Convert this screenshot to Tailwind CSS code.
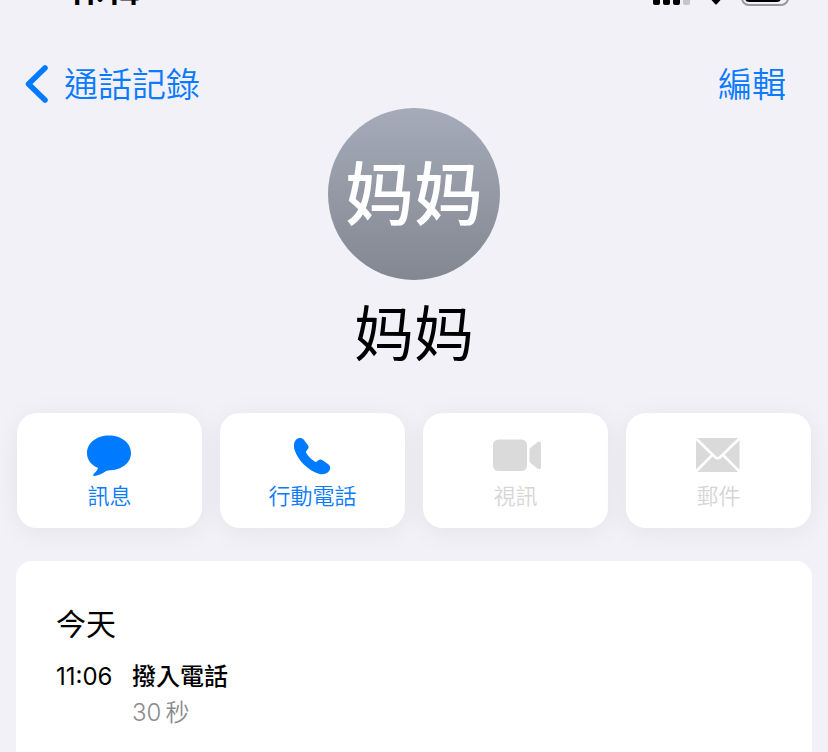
<!DOCTYPE html>
<html lang="zh-Hant">
<head>
<meta charset="utf-8">
<meta name="viewport" content="width=device-width, initial-scale=1">
<title>通話記錄</title>
<script src="https://cdn.jsdelivr.net/npm/@tailwindcss/browser@4"></script>
</head>
<body class="min-h-screen flex flex-col bg-[#f2f1f8] text-black overflow-x-hidden font-['Inter','Noto_Sans_CJK_TC',sans-serif]">
  <div class="h-1.5 overflow-hidden flex items-end justify-between pl-[68px] pr-9 shrink-0">
    <span class="text-[32px] leading-6 font-semibold">11:14</span>
    <div class="flex items-end gap-[19px]">
      <svg class="w-[38px] h-6" viewBox="0 0 38 24" aria-hidden="true"><rect x="0" y="14" width="7" height="9" rx="2"/><rect x="10" y="10" width="7" height="13" rx="2"/><rect x="20" y="5" width="7" height="18" rx="2"/><rect x="30" y="0" width="7" height="23" rx="2" fill="#c6c5cb"/></svg>
      <svg class="w-3 h-6" viewBox="0 0 12 24" aria-hidden="true"><path d="M1 17.500Q6 13 11 17.500L6.700 22.200Q6 23 5.300 22.200Z"/></svg>
      <svg class="w-[51px] h-6" viewBox="0 0 51 24" aria-hidden="true"><rect x="1" y="1" width="46" height="22" rx="7" fill="none" stroke="#99989e" stroke-width="2"/><rect x="4" y="3" width="36" height="17" rx="4"/></svg>
    </div>
  </div>

  <nav class="mt-[54px] h-12 pl-6 pr-[42px] flex items-center justify-between text-[34px] leading-12 font-[350] text-[#0a7aff]">
    <a href="#" class="flex items-center gap-4">
      <svg class="w-6 h-10" viewBox="0 0 24 40" fill="none" stroke="#007aff" stroke-width="5.500" stroke-linecap="round" stroke-linejoin="round" aria-hidden="true"><path d="M21 4 4.500 20 21 36"/></svg>
      <span class="pt-0.5">通話記錄</span>
    </a>
    <button type="button" class="pt-0.5">編輯</button>
  </nav>

  <header class="flex flex-col items-center font-['Noto_Sans_CJK_SC',sans-serif]">
    <div class="size-[172px] pb-2 rounded-full bg-linear-to-b from-[#a5abb9] to-[#838791] flex items-center justify-center text-white text-[69px] leading-none font-medium" lang="zh-Hans" aria-hidden="true">妈妈</div>
    <h1 class="mt-5 text-[60px] leading-none" lang="zh-Hans">妈妈</h1>
  </header>

  <div class="mt-[53px] px-[17px] grid grid-cols-4 gap-[18px] text-[22px] leading-6 font-[350] text-[#0a7aff]">
    <button type="button" class="h-[115px] pt-5 rounded-[20px] bg-white shadow-[0_4px_28px_rgba(0,0,0,0.06)] flex flex-col items-center gap-[7px]">
      <svg class="w-12 h-11" viewBox="1 0 48 44" fill="#007aff" aria-hidden="true"><path d="M24 2.500C11.500 2.500 2 10 2 20c0 6.500 4 11.800 10.300 14.600.6.300.7 1 .3 1.600-1 1.800-2.600 3.600-4 4.800-1 .9-.5 2.200.8 2 4.500-.6 8.400-2.600 11.400-4.800.8-.6 1.400-.8 2.300-.8C36.500 37.400 46 30 46 20S36.500 2.500 24 2.500Z"/></svg>
      <span>訊息</span>
    </button>
    <button type="button" class="h-[115px] pt-5 rounded-[20px] bg-white shadow-[0_4px_28px_rgba(0,0,0,0.06)] flex flex-col items-center gap-[7px]">
      <svg class="w-12 h-11" viewBox="1 0 48 44" fill="#007aff" aria-hidden="true"><path d="M8.500 6.200C10.800 4.400 14 4.400 15.800 6.800L19.800 12.100C21 13.900 20.900 15.100 19.500 16.600L18.400 17.900C17.800 18.700 17.800 19.200 18.300 20C20.200 23.200 23.400 26.400 26.700 28.600C27.500 29.100 28.100 29 28.800 28.500L30.300 27.300C31.900 26.100 33.200 26.200 35 27.400L40.200 31.200C42.700 33 42.800 35.900 40.900 38.200C38.500 41 35 41.900 30.900 40.700C20.200 37.300 10.200 27.700 6.600 16.900C5.300 12.800 6 8.400 8.500 6.200Z"/></svg>
      <span>行動電話</span>
    </button>
    <button type="button" disabled class="h-[115px] pt-5 rounded-[20px] bg-white shadow-[0_4px_28px_rgba(0,0,0,0.06)] flex flex-col items-center gap-[7px] text-[#d6d6d6]">
      <svg class="w-[50px] h-11" viewBox="0 0 50 44" fill="#dadada" aria-hidden="true"><rect x="2" y="6.500" width="34" height="31.500" rx="5.500"/><path d="M38.500 17q0-1.400 1-2.300l6.500-5.200q1.800-1.400 3-.8 1 .5 1 2V34q0 1.500-1 2-1.200.500-3-.8l-6.500-5.200q-1-.9-1-2.300Z"/></svg>
      <span>視訊</span>
    </button>
    <button type="button" disabled class="h-[115px] pt-5 rounded-[20px] bg-white shadow-[0_4px_28px_rgba(0,0,0,0.06)] flex flex-col items-center gap-[7px] text-[#d6d6d6]">
      <svg class="w-12 h-11" viewBox="1 0 48 44" fill="none" aria-hidden="true"><rect x="2" y="5" width="43.500" height="34" rx="1" fill="#dadada"/><path d="M2 5.500 21 24q2.700 2.600 5.400 0L45.500 5.500M2 38.500 18.300 22M45.500 38.500 29 22" stroke="#fff" stroke-width="2.500"/></svg>
      <span>郵件</span>
    </button>
  </div>

  <main class="relative mt-[33px] mx-4 grow rounded-t-[16px] bg-white px-10 pt-[45px] pb-5">
    <h2 class="text-[30px] leading-9">今天</h2>
    <div class="mt-[17px] flex gap-4 text-[24px] leading-9">
      <time datetime="11:06" class="w-15">11:06</time>
      <div>
        <p class="font-medium">撥入電話</p>
        <p class="flex gap-1 font-[350] text-[#8a8a8e]"><span>30</span><span>秒</span></p>
      </div>
    </div>
  </main>
</body>
</html>
